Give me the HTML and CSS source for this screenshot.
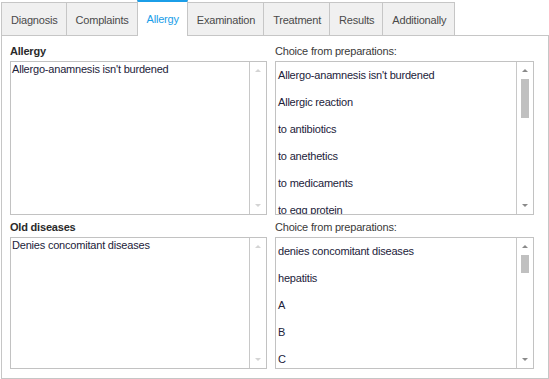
FILE: index.html
```html
<!DOCTYPE html>
<html>
<head>
<meta charset="utf-8">
<link rel="stylesheet" href="styles.css">
</head>
<body>
<div class="tabs">
  <div class="tab first">Diagnosis</div>
  <div class="tab">Complaints</div>
  <div class="tab active">Allergy</div>
  <div class="tab">Examination</div>
  <div class="tab">Treatment</div>
  <div class="tab">Results</div>
  <div class="tab">Additionally</div>
</div>
<div class="panel">
  <div class="label bold">Allergy</div>
  <div class="label">Choice from preparations:</div>
  <div class="box tall">
    <div class="content"><div class="memo">Allergo-anamnesis isn't burdened</div></div>
    <div class="scroll disabled"><span class="up"></span><span class="down"></span></div>
  </div>
  <div class="box tall">
    <div class="content">
      <div class="item">Allergo-anamnesis isn't burdened</div>
      <div class="item">Allergic reaction</div>
      <div class="item">to antibiotics</div>
      <div class="item">to anethetics</div>
      <div class="item">to medicaments</div>
      <div class="item">to egg protein</div>
    </div>
    <div class="scroll"><span class="up"></span><span class="thumb big"></span><span class="down"></span></div>
  </div>
  <div class="label bold second">Old diseases</div>
  <div class="label second">Choice from preparations:</div>
  <div class="box short">
    <div class="content"><div class="memo">Denies concomitant diseases</div></div>
    <div class="scroll disabled"><span class="up"></span><span class="down"></span></div>
  </div>
  <div class="box short">
    <div class="content">
      <div class="item">denies concomitant diseases</div>
      <div class="item">hepatitis</div>
      <div class="item">A</div>
      <div class="item">B</div>
      <div class="item">C</div>
    </div>
    <div class="scroll"><span class="up"></span><span class="thumb small"></span><span class="down"></span></div>
  </div>
</div>
</body>
</html>
```
FILE: styles.css
```css
* { box-sizing: border-box; }
html, body { margin: 0; padding: 0; background: #ffffff; }
body {
  font-family: "Liberation Sans", Arial, sans-serif;
  font-size: 11px;
  letter-spacing: -0.2px;
  color: #22223a;
  width: 549px;
  height: 379px;
  overflow: hidden;
}
.tabs {
  display: flex;
  align-items: flex-end;
  height: 35px;
  padding-left: 1px;
}
.tab {
  height: 33px;
  padding: 1px 8px 0 9px;
  display: flex;
  align-items: center;
  background: #f0f0f0;
  border: 1px solid #c6c6c6;
  border-bottom: none;
  margin-left: -1px;
  color: #4a4a4a;
}
.tab.first { margin-left: 0; }
.tab.active {
  height: 36px;
  margin-bottom: -1px;
  background: #ffffff;
  border-top: 2px solid #1b9ee8;
  color: #1b9ee8;
  padding-top: 0;
  padding-bottom: 1px;
  position: relative;
  z-index: 1;
}
.panel {
  margin: 0 0 0 1px;
  width: 548px;
  height: 344px;
  border: 1px solid #c6c6c6;
  padding: 6px 14px 9px 8px;
  display: grid;
  grid-template-columns: 257px 259px;
  grid-template-rows: 16px 154px 16px 132px;
  column-gap: 8px;
  row-gap: 3px;
}
.label { line-height: 16px; color: #3a3a3a; padding-top: 1px; }
.label.bold { font-weight: bold; color: #2a2a2a; }
.label.second { margin-top: 0; }
.box {
  border: 1px solid #c2c2c2;
  display: flex;
  overflow: hidden;
  background: #fff;
}
.content { flex: 1; overflow: hidden; }
.memo { padding: 0 0 0 1px; line-height: 15px; }
.item { height: 27px; line-height: 27px; padding-left: 2px; white-space: nowrap; }
.scroll {
  width: 17px;
  border-left: 1px solid #c8c8c8;
  position: relative;
  display: flex;
  flex-direction: column;
  align-items: center;
}
.up, .down {
  position: absolute;
  left: 5px;
  width: 0;
  height: 0;
  border-left: 3px solid transparent;
  border-right: 3px solid transparent;
}
.up { top: 7px; border-bottom: 3px solid #8a8a8a; }
.down { bottom: 7px; border-top: 3px solid #8a8a8a; }
.disabled .up { border-bottom-color: #d4d4d4; }
.disabled .down { border-top-color: #d4d4d4; }
.thumb {
  margin-top: 17px;
  width: 8px;
  background: #c0c0c0;
}
.thumb.big { height: 39px; }
.thumb.small { height: 18px; }
```
